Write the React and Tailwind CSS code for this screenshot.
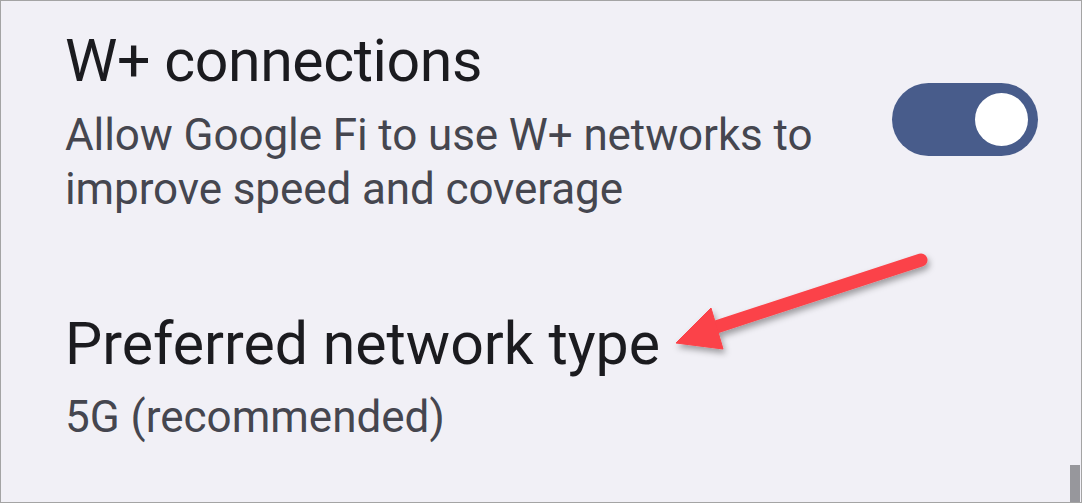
export default function App() {
  return (
    <div className="relative h-[503px] w-[1082px] overflow-hidden border border-[#a4a4a4] bg-[#f1f0f6] font-['Roboto',sans-serif]">
      <div className="pl-[64px] pr-[43px] pt-[28px]">
        {/* W+ connections row */}
        <div className="flex items-start justify-between">
          <div>
            <h2 className="text-[59px] leading-[64px] tracking-[-0.4px] text-[#1b1b1f]">W+ connections</h2>
            <p className="mt-[15px] text-[44px] leading-[54px] tracking-[-0.1px] text-[#45464f]">
              Allow Google Fi to use W+ networks to
              <br />
              improve speed and coverage
            </p>
          </div>
          <button className="mt-[54px] flex h-[73px] w-[146px] items-center justify-end rounded-full bg-[#485c8b] pr-[10px]">
            <span className="h-[53px] w-[53px] rounded-full bg-white" />
          </button>
        </div>

        {/* Preferred network type */}
        <div className="mt-[96px]">
          <h2 className="text-[59px] leading-[64px] text-[#1b1b1f]">Preferred network type</h2>
          <p className="mt-[14px] text-[44px] leading-[54px] text-[#45464f]">5G (recommended)</p>
        </div>
      </div>

      {/* annotation arrow */}
      <svg className="pointer-events-none absolute left-0 top-0" width="1082" height="503">
        <defs>
          <filter id="sh" x="-20%" y="-20%" width="140%" height="160%">
            <feDropShadow dx="2" dy="4" stdDeviation="3" floodColor="#000" floodOpacity="0.35" />
          </filter>
        </defs>
        <g filter="url(#sh)" fill="#fb4248" stroke="#fb4248">
          <line x1="920" y1="259" x2="712" y2="327" strokeWidth="13" strokeLinecap="round" />
          <polygon points="675,342 710,307 722,348" strokeWidth="1" strokeLinejoin="round" />
        </g>
      </svg>

      {/* scrollbar thumb */}
      <div className="absolute bottom-0 right-[1px] h-[37px] w-[10px] bg-[#97979c]" />
    </div>
  );
}
